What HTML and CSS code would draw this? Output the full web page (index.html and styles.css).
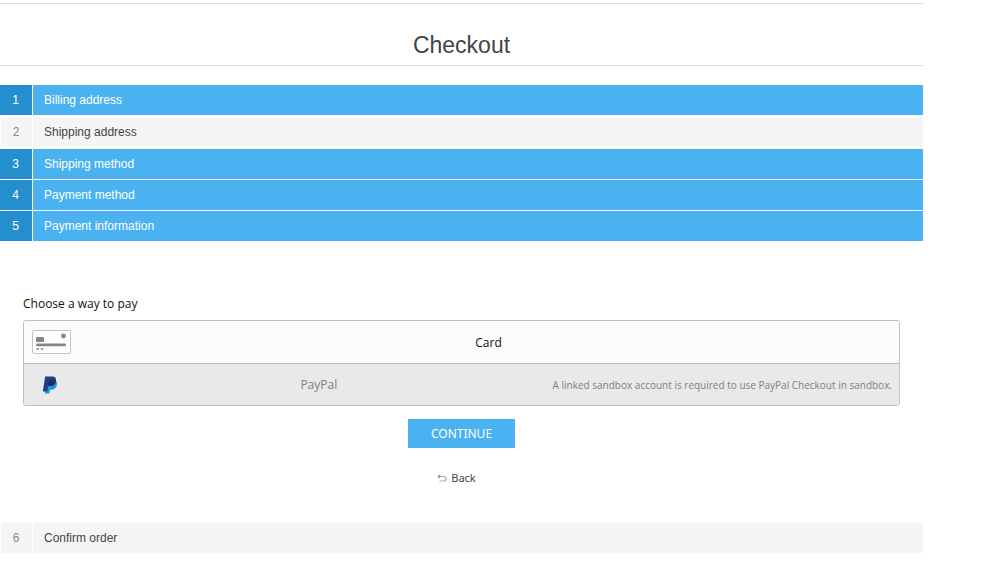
FILE: index.html
```html
<!DOCTYPE html>
<html lang="en">
<head>
    <meta charset="UTF-8">
    <meta name="viewport" content="width=device-width, initial-scale=1.0">
    <title>Checkout</title>
    <link rel="stylesheet" href="styles.css">
</head>
<body>
    <main class="checkout-page">
        <div class="page-title">
            <h1>Checkout</h1>
        </div>

        <ol class="steps">
            <li class="step">
                <div class="step-title allow">
                    <span class="number">1</span>
                    <h2>Billing address</h2>
                </div>
            </li>
            <li class="step">
                <div class="step-title inactive">
                    <span class="number">2</span>
                    <h2>Shipping address</h2>
                </div>
            </li>
            <li class="step">
                <div class="step-title allow">
                    <span class="number">3</span>
                    <h2>Shipping method</h2>
                </div>
            </li>
            <li class="step">
                <div class="step-title allow">
                    <span class="number">4</span>
                    <h2>Payment method</h2>
                </div>
            </li>
            <li class="step">
                <div class="step-title allow">
                    <span class="number">5</span>
                    <h2>Payment information</h2>
                </div>
                <div class="step-content">
                    <h3 class="pay-heading">Choose a way to pay</h3>
                    <div class="pay-options">
                        <button type="button" class="pay-option">
                            <svg class="pay-icon" viewBox="0 0 40 24" aria-hidden="true">
                                <rect x="1.5" y="0.5" width="38" height="23" rx="1.5" fill="#fff" stroke="#c4c4c4"/>
                                <rect x="5" y="7" width="8" height="5" rx="1" fill="#858585"/>
                                <circle cx="32.5" cy="6" r="2.4" fill="#858585"/>
                                <rect x="5" y="13.6" width="30" height="2.6" rx="1.2" fill="#858585"/>
                                <path d="M5.5 18.9h2.5M9.8 18.9h2.5" stroke="#858585" stroke-width="1.5"/>
                            </svg>
                            <span class="pay-label">Card</span>
                        </button>
                        <button type="button" class="pay-option disabled" disabled>
                            <svg class="pay-icon" viewBox="0 0 40 24" aria-hidden="true">
                                <path d="M24.6 7.8c1.3 1 1.7 2.4 1.3 4.2-.7 3.3-2.8 4.7-6 4.7h-.9l-.8 3.8h-4.3l1.5-8.5z" fill="#179bd7"/>
                                <path d="M14.2 3.4h6.9c3 0 4.4 1.7 3.9 4.5-.6 3.5-2.9 5.2-6.2 5.2h-1.6l-1 5.4h-4.4z" fill="#253b80"/>
                                <path d="M17.6 7.2h4.9c.9 0 1.7.2 2.4.7-.6 3.5-2.9 5.2-6.1 5.2h-2.2z" fill="#222d65"/>
                            </svg>
                            <span class="pay-label">PayPal</span>
                            <span class="pay-note">A linked sandbox account is required to use PayPal Checkout in sandbox.</span>
                        </button>
                    </div>
                    <div class="buttons">
                        <button type="button" class="continue-btn">CONTINUE</button>
                        <a href="#" class="back-link">
                            <svg class="back-icon" viewBox="0 0 10 8" aria-hidden="true">
                                <path d="M1.5 2.5h5.3c3 0 3 4.5 0 4.5H2.5" fill="none" stroke="#aaa" stroke-width="1.2"/>
                                <path d="M0 2.5L3 0v5z" fill="#aaa"/>
                            </svg>
                            Back
                        </a>
                    </div>
                </div>
            </li>
            <li class="step">
                <div class="step-title inactive">
                    <span class="number">6</span>
                    <h2>Confirm order</h2>
                </div>
            </li>
        </ol>
    </main>
</body>
</html>
```
FILE: styles.css
```css
* {
    box-sizing: border-box;
}

body {
    margin: 0;
    padding: 3px 77px 0 0;
    background: #fff;
    color: #444;
    font-family: "Liberation Sans", Arial, sans-serif;
}

h1, h2, h3 {
    margin: 0;
    font-weight: normal;
}

button {
    font-family: inherit;
    cursor: pointer;
}

.checkout-page {
    border-top: 1px solid #ddd;
}

.page-title {
    padding: 24px 0 3px;
    border-bottom: 1px solid #ddd;
    text-align: center;
}

.page-title h1 {
    font-size: 23px;
    line-height: 34px;
}

/* steps */
.steps {
    display: flex;
    flex-direction: column;
    gap: 1px;
    margin: 0;
    padding: 19px 0 0;
    list-style: none;
}

.step-title {
    display: flex;
    height: 30px;
    line-height: 30px;
    background: #f5f5f5;
}

.step-title .number {
    width: 33px;
    padding-right: 1px;
    border-right: 1px solid #fff;
    font-size: 12px;
    text-align: center;
    color: #888;
}

.step-title h2 {
    padding-left: 11px;
    font-size: 12px;
}

.step-title.inactive {
    margin: 1px 0;
}

.step-title.inactive .number {
    border-left: 1px solid #fff;
}

.step-title.allow,
.step-title.allow .number {
    color: #fff;
}

.step-title.allow {
    background: #4ab2f1;
}

.step-title.allow .number {
    background: #248ece;
}

/* payment */
.step-content {
    padding: 53px 23px 33px;
    font-family: "Open Sans", "Noto Sans", sans-serif;
}

.pay-heading {
    margin-bottom: 6px;
    font-size: 12px;
    line-height: 20px;
    color: #111;
}

.pay-options {
    overflow: hidden;
    border: 1px solid #c0c0c0;
    border-radius: 3px;
}

.pay-option {
    display: flex;
    align-items: center;
    width: 100%;
    height: 42px;
    padding: 0 7px;
    border: 0;
    background: #fbfbfb;
    font-size: 12px;
    color: #111;
}

.pay-option.disabled {
    border-top: 1px solid #c0c0c0;
    background: #e9e9e9;
    color: #808080;
}

.pay-icon {
    width: 40px;
    height: 24px;
    margin-right: 14px;
}

.pay-label {
    flex: 1;
    text-align: center;
}

.pay-note {
    font-size: 10px;
}

.buttons {
    display: flex;
    flex-direction: column;
    align-items: center;
    gap: 20px;
    padding-top: 13px;
    font-family: "Noto Sans", sans-serif;
}

.continue-btn {
    height: 29px;
    padding: 0 23px;
    border: 0;
    background: #4ab2f1;
    font-size: 12px;
    color: #fff;
}

.back-link {
    display: flex;
    align-items: center;
    gap: 4px;
    padding-right: 10px;
    font-size: 11px;
    line-height: 20px;
    color: #444;
    text-decoration: none;
}

.back-icon {
    width: 10px;
    height: 8px;
}
```
